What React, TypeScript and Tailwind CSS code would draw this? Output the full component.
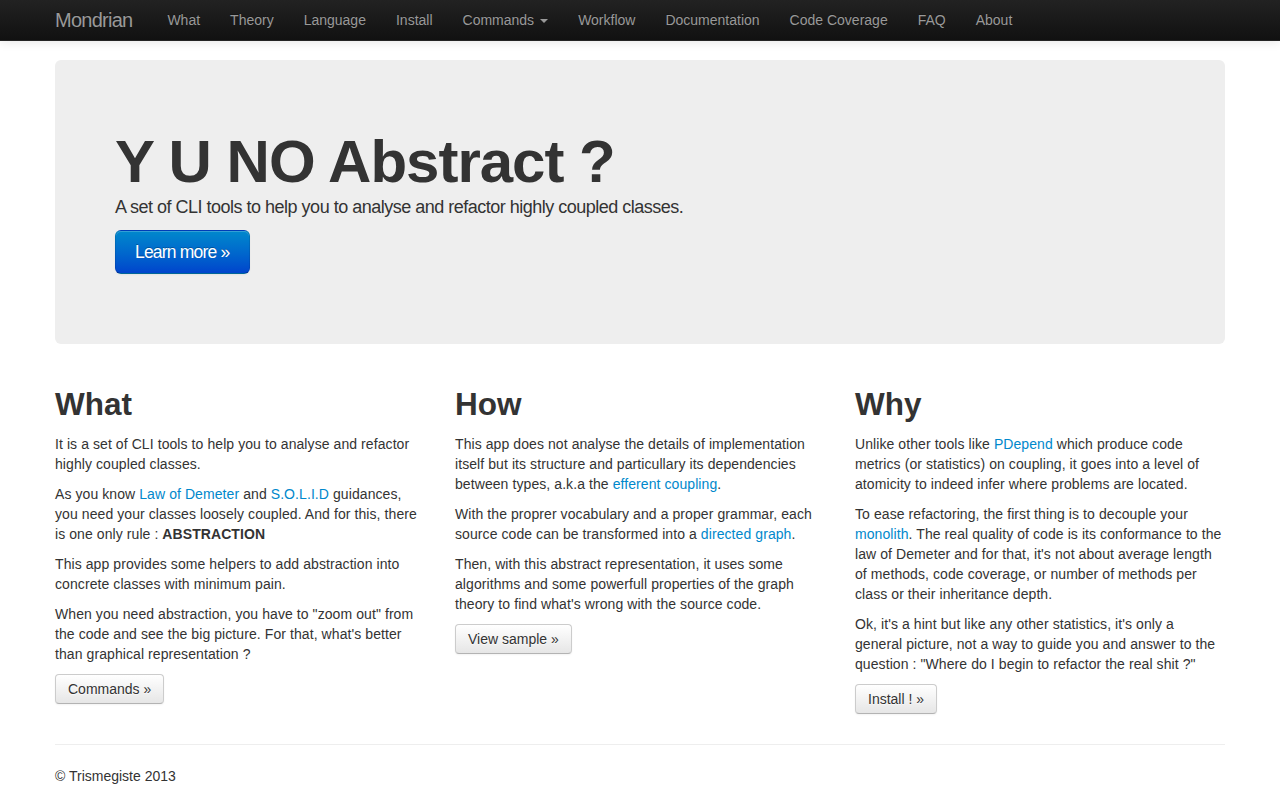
import { ReactNode } from 'react';

const navItems = [
  'What',
  'Theory',
  'Language',
  'Install',
  'Commands',
  'Workflow',
  'Documentation',
  'Code Coverage',
  'FAQ',
  'About',
];

function App() {
  return (
    <div className="min-h-screen bg-white font-['Liberation_Sans',Arial,sans-serif] text-[14px] leading-5 text-[#333]">
      <nav className="h-[41px] border-b border-[#252525] bg-linear-to-b from-[#222] to-[#111] shadow-[0_1px_10px_rgba(0,0,0,0.1)]">
        <div className="mx-auto flex w-[1170px] items-start">
          <a className="-ml-5 px-5 py-[10px] text-[20px] font-extralight leading-5 tracking-[-0.75px] text-[#999] [text-shadow:0_-1px_0_rgba(0,0,0,0.25)]">
            Mondrian
          </a>
          <ul className="flex">
            {navItems.map((item) => (
              <li key={item}>
                <a className="flex items-center px-[15px] py-[10px] text-[14px] leading-5 text-[#999] [text-shadow:0_-1px_0_rgba(0,0,0,0.25)]">
                  {item}
                  {item === 'Commands' && (
                    <span className="ml-[6px] mt-[1px] inline-block h-0 w-0 border-x-4 border-t-4 border-x-transparent border-t-[#999]" />
                  )}
                </a>
              </li>
            ))}
          </ul>
        </div>
      </nav>

      <div className="mx-auto w-[1170px]">
        <div className="mb-[30px] mt-[19px] rounded-[6px] bg-[#eee] p-[60px]">
          <h1 className="mt-[12px] text-[60px] font-bold leading-none tracking-[-1px] text-[#333]">
            Y U NO Abstract ?
          </h1>
          <p className="mb-[8px] text-[18px] font-light leading-[30px] tracking-[-0.5px]">
            A set of CLI tools to help you to analyse and refactor highly
            coupled classes.
          </p>
          <div className="mb-[10px] h-[44px]">
            <a className="inline-block rounded-[6px] border border-[rgba(0,0,0,0.1)] border-b-[rgba(0,0,0,0.25)] bg-linear-to-b from-[#0088cc] to-[#0044cc] px-[19px] py-[11px] text-[17.5px] font-light leading-5 tracking-[-0.8px] text-white shadow-[inset_0_1px_0_rgba(255,255,255,0.2),0_1px_2px_rgba(0,0,0,0.05)] [text-shadow:0_-1px_0_rgba(0,0,0,0.25)]">
              Learn more »
            </a>
          </div>
        </div>

        <div className="grid grid-cols-3 gap-[30px] tracking-[0.08px]">
          <Column title="What" button="Commands »">
            <P>
              It is a set of CLI tools to help you to analyse and refactor
              highly coupled classes.
            </P>
            <P>
              As you know <A>Law of Demeter</A> and <A>S.O.L.I.D</A> guidances,
              you need your classes loosely coupled. And for this, there is one
              only rule : <b className="font-bold">ABSTRACTION</b>
            </P>
            <P>
              This app provides some helpers to add abstraction into concrete
              classes with minimum pain.
            </P>
            <P>
              When you need abstraction, you have to "zoom out" from the code
              and see the big picture. For that, what's better than graphical
              representation ?
            </P>
          </Column>
          <Column title="How" button="View sample »">
            <P>
              This app does not analyse the details of implementation itself
              but its structure and particullary its dependencies between
              types, a.k.a the <A>efferent coupling</A>.
            </P>
            <P>
              With the proprer vocabulary and a proper grammar, each source code
              can be transformed into a <A>directed graph</A>.
            </P>
            <P>
              Then, with this abstract representation, it uses some algorithms
              and some powerfull properties of the graph theory to find what's
              wrong with the source code.
            </P>
          </Column>
          <Column title="Why" button="Install ! »">
            <P>
              Unlike other tools like <A>PDepend</A> which produce code metrics
              (or statistics) on coupling, it goes into a level of atomicity to
              indeed infer where problems are located.
            </P>
            <P>
              To ease refactoring, the first thing is to decouple your{' '}
              <A>monolith</A>. The real quality of code is its conformance to
              the law of Demeter and for that, it's not about average length of
              methods, code coverage, or number of methods per class or their
              inheritance depth.
            </P>
            <P>
              Ok, it's a hint but like any other statistics, it's only a general
              picture, not a way to guide you and answer to the question :
              "Where do I begin to refactor the real shit ?"
            </P>
          </Column>
        </div>

        <hr className="my-5 border-0 border-t border-b border-t-[#eee] border-b-white" />
        <footer>
          <p className="mb-[10px]">© Trismegiste 2013</p>
        </footer>
      </div>
    </div>
  );
}

type ColumnProps = {
  title: string;
  button: string;
  children: ReactNode;
};

const Column = ({ title, button, children }: ColumnProps) => {
  return (
    <div>
      <h2 className="my-[10px] text-[31.5px] font-bold leading-10 tracking-normal text-[#333]">
        {title}
      </h2>
      {children}
      <p className="mb-[10px]">
        <a className="inline-block rounded-[4px] border border-[#ccc] border-b-[#b3b3b3] bg-linear-to-b from-white to-[#e6e6e6] px-3 py-1 text-[14px] leading-5 tracking-normal text-[#333] shadow-[inset_0_1px_0_rgba(255,255,255,0.2),0_1px_2px_rgba(0,0,0,0.05)] [text-shadow:0_1px_1px_rgba(255,255,255,0.75)]">
          {button}
        </a>
      </p>
    </div>
  );
};

const P = ({ children }: { children: ReactNode }) => (
  <p className="mb-[10px]">{children}</p>
);

const A = ({ children }: { children: ReactNode }) => (
  <a className="text-[#0088cc]">{children}</a>
);

export default App;
